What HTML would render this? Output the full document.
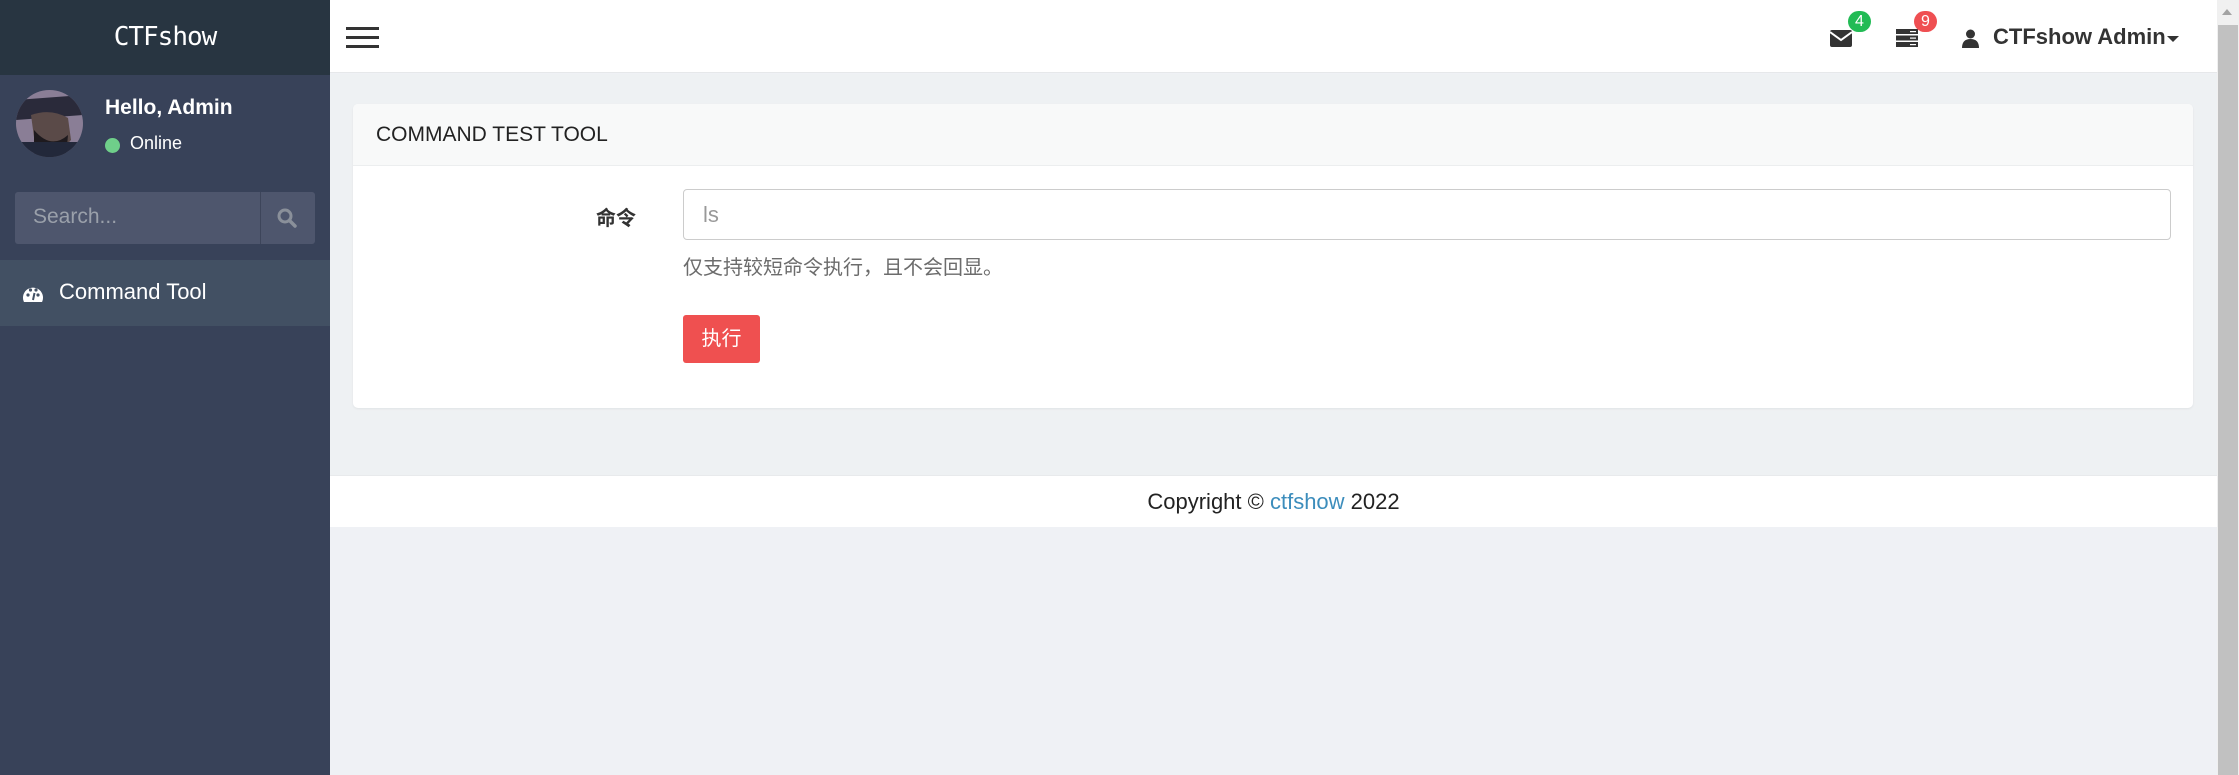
<!DOCTYPE html>
<html><head><meta charset="utf-8"><style>
*{box-sizing:border-box;margin:0;padding:0}
body{width:2239px;height:775px;overflow:hidden;background:#eff1f5;font-family:"Liberation Sans","Noto Sans CJK SC",sans-serif;position:relative}
.abs{position:absolute}
</style></head><body>
<div class="abs" style="left:0;top:0;width:330px;height:775px;background:#384259"></div>
<div class="abs" style="left:0;top:0;width:330px;height:75px;background:#283541;color:#fff;font-family:'DejaVu Sans Mono',monospace;font-size:26px;line-height:75px;text-align:center;letter-spacing:-1px">CTFshow</div>
<svg class="abs" style="left:16px;top:90px" width="67" height="67" viewBox="0 0 67 67"><defs><clipPath id="c"><circle cx="33.5" cy="33.5" r="33.5"/></clipPath></defs><g clip-path="url(#c)"><rect width="67" height="67" fill="#8a7e96"/><path d="M0 10 L67 5 L67 25 L0 30Z" fill="#2a2a3a"/><path d="M15 25 Q35 18 52 28 L55 50 Q40 67 20 62 Z" fill="#5a4a48"/><path d="M18 40 Q35 60 52 45 L50 67 L18 67Z" fill="#1e1a1e"/><rect x="0" y="52" width="67" height="15" fill="#22283a"/></g></svg>
<div class="abs" style="left:105px;top:96px;color:#fff;font-weight:bold;font-size:21px">Hello, Admin</div>
<div class="abs" style="left:105px;top:138px;width:15px;height:15px;border-radius:50%;background:#6fcf8a"></div>
<div class="abs" style="left:130px;top:133px;color:#fff;font-size:18px">Online</div>
<div class="abs" style="left:15px;top:192px;width:300px;height:52px;background:#4e566d;border-radius:3px"></div>
<div class="abs" style="left:260px;top:192px;width:1px;height:52px;background:#3d455a"></div>
<div class="abs" style="left:33px;top:205px;color:#9aa0aa;font-size:21px">Search...</div>
<svg class="abs" style="left:277px;top:208px" width="20" height="20" viewBox="0 0 20 20"><circle cx="8" cy="8" r="6" fill="none" stroke="#8a909a" stroke-width="3"/><path d="M12.5 12.5 L18 18" stroke="#8a909a" stroke-width="3.5" stroke-linecap="round"/></svg>
<div class="abs" style="left:0;top:260px;width:330px;height:66px;background:#425063"></div>
<svg class="abs" style="left:22px;top:284px" width="22" height="20" viewBox="0 0 22 20"><path d="M2 18 A10 10 0 1 1 20 18 Z" fill="#fff"/><circle cx="6" cy="11" r="1.6" fill="#425063"/><circle cx="8.5" cy="6" r="1.6" fill="#425063"/><circle cx="14" cy="6" r="1.6" fill="#425063"/><circle cx="16" cy="11" r="1.6" fill="#425063"/><path d="M11 16 L12.5 9" stroke="#425063" stroke-width="2"/></svg>
<div class="abs" style="left:59px;top:279px;color:#fff;font-size:22px">Command Tool</div>

<div class="abs" style="left:330px;top:0;width:1887px;height:73px;background:#fff;border-bottom:1px solid #e6e8ea"></div>
<div class="abs" style="left:346px;top:27px;width:33px;height:3px;background:#333"></div>
<div class="abs" style="left:346px;top:36px;width:33px;height:3px;background:#333"></div>
<div class="abs" style="left:346px;top:45px;width:33px;height:3px;background:#333"></div>
<svg class="abs" style="left:1830px;top:30px" width="22" height="17" viewBox="0 0 22 17"><rect width="22" height="17" rx="2" fill="#333"/><path d="M0 2 L11 10 L22 2" stroke="#fff" stroke-width="2" fill="none"/></svg>
<div class="abs" style="left:1848px;top:11px;width:23px;height:21px;border-radius:11px;background:#22bb55;color:#fff;font-size:16px;text-align:center;line-height:21px">4</div>
<svg class="abs" style="left:1896px;top:29px" width="22" height="18" viewBox="0 0 22 18"><rect y="0" width="22" height="5" fill="#333"/><rect y="6.5" width="22" height="5" fill="#333"/><rect y="13" width="22" height="5" fill="#333"/><rect x="14" y="2" width="6" height="1.2" fill="#fff"/><rect x="14" y="8.5" width="6" height="1.2" fill="#fff"/><rect x="14" y="15" width="6" height="1.2" fill="#fff"/></svg>
<div class="abs" style="left:1914px;top:11px;width:23px;height:21px;border-radius:11px;background:#ef4f52;color:#fff;font-size:16px;text-align:center;line-height:21px">9</div>
<svg class="abs" style="left:1962px;top:29px" width="17" height="19" viewBox="0 0 17 19"><circle cx="8.5" cy="5" r="4.5" fill="#333"/><path d="M0 19 Q0 10 8.5 10 Q17 10 17 19Z" fill="#333"/></svg>
<div class="abs" style="left:1993px;top:24px;color:#333;font-weight:bold;font-size:22px">CTFshow Admin</div>
<div class="abs" style="left:2167px;top:36px;width:0;height:0;border-left:6px solid transparent;border-right:6px solid transparent;border-top:6px solid #333"></div>

<div class="abs" style="left:330px;top:74px;width:1887px;height:401px;background:#eef1f3"></div>
<div class="abs" style="left:353px;top:104px;width:1840px;height:304px;background:#fff;border-radius:5px;box-shadow:0 1px 2px rgba(0,0,0,.06);overflow:hidden">
 <div style="height:62px;background:#f8f9f9;border-bottom:1px solid #eceeef;padding-left:23px;line-height:62px;font-size:21px;color:#222">COMMAND TEST TOOL</div>
</div>
<div class="abs" style="left:596px;top:202px;font-weight:bold;font-size:20px;color:#333">命令</div>
<div class="abs" style="left:683px;top:189px;width:1488px;height:51px;border:1px solid #ccc;border-radius:4px;background:#fff;padding-left:19px;line-height:49px;font-size:22px;color:#999">ls</div>
<div class="abs" style="left:683px;top:251px;font-size:20px;color:#6c6c6c">仅支持较短命令执行，且不会回显。</div>
<div class="abs" style="left:683px;top:315px;width:77px;height:48px;background:#ef5050;border-radius:3px;color:#fff;font-size:20px;text-align:center;line-height:48px">执行</div>

<div class="abs" style="left:330px;top:475px;width:1887px;height:52px;background:#fff;border-top:1px solid #e8eaec;text-align:center;line-height:52px;font-size:22px;color:#222">Copyright © <span style="color:#3c8dbc">ctfshow</span> 2022</div>

<div class="abs" style="left:2217px;top:0;width:22px;height:775px;background:#f0f0f0"></div>
<div class="abs" style="left:2218px;top:25px;width:20px;height:750px;background:#c1c1c1"></div>
<div class="abs" style="left:2222px;top:9px;width:0;height:0;border-left:5px solid transparent;border-right:5px solid transparent;border-bottom:6px solid #a3a3a3"></div>
</body></html>
